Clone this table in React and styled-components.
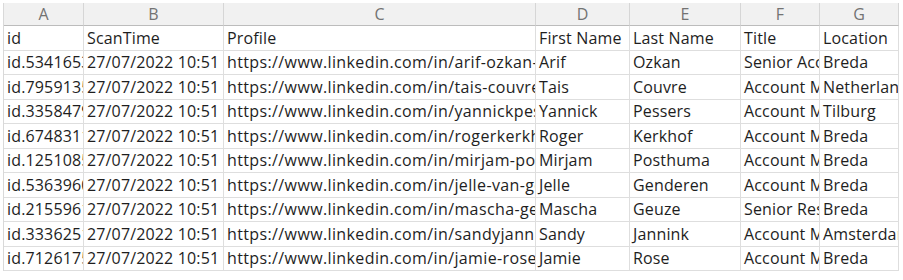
import React from "react";
import styled, { createGlobalStyle } from "styled-components";

const Global = createGlobalStyle`
  html, body { margin: 0; padding: 0; background: #ffffff; }
  body { font-family: "Open Sans", Lato, "Liberation Sans", sans-serif; }
`;

const COLS = [80, 140, 312, 94, 111, 79, 79];

const Sheet = styled.div`
  padding: 3px 0 0 3px;
`;

const Grid = styled.div`
  display: grid;
  grid-template-columns: ${COLS.map((c) => c + "px").join(" ")};
  grid-auto-rows: 24.5px;
  grid-template-rows: 23px;
  width: max-content;
  border-left: 1px solid #d9d9d9;
`;

const HeadCell = styled.div`
  background: #f1f1f1;
  color: #737373;
  font-size: 16px;
  display: flex;
  align-items: center;
  justify-content: center;
  border-right: 1px solid #d6d6d6;
  border-bottom: 1px solid #bcbcbc;
  box-sizing: border-box;
`;

const Cell = styled.div`
  color: #1e1e1e;
  font-size: 16px;
  letter-spacing: ${(p) => (p.$wide ? "0.38px" : "0.15px")};
  padding-left: 3px;
  white-space: nowrap;
  overflow: hidden;
  display: flex;
  align-items: center;
  border-right: 1px solid #dedede;
  border-bottom: 1px solid #dedede;
  box-sizing: border-box;
`;

const headers = ["A", "B", "C", "D", "E", "F", "G"];

const rows = [
  ["id", "ScanTime", "Profile", "First Name", "Last Name", "Title", "Location"],
  ["id.5341653", "27/07/2022 10:51", "https://www.linkedin.com/in/arif-ozkan-", "Arif", "Ozkan", "Senior Account Manager", "Breda"],
  ["id.7959135", "27/07/2022 10:51", "https://www.linkedin.com/in/tais-couvre", "Tais", "Couvre", "Account Manager", "Netherlands"],
  ["id.3358479", "27/07/2022 10:51", "https://www.linkedin.com/in/yannickpessers", "Yannick", "Pessers", "Account Manager", "Tilburg"],
  ["id.6748311", "27/07/2022 10:51", "https://www.linkedin.com/in/rogerkerkhof", "Roger", "Kerkhof", "Account Manager", "Breda"],
  ["id.1251085", "27/07/2022 10:51", "https://www.linkedin.com/in/mirjam-posthuma", "Mirjam", "Posthuma", "Account Manager", "Breda"],
  ["id.5363960", "27/07/2022 10:51", "https://www.linkedin.com/in/jelle-van-genderen", "Jelle", "Genderen", "Account Manager", "Breda"],
  ["id.2155961", "27/07/2022 10:51", "https://www.linkedin.com/in/mascha-geuze", "Mascha", "Geuze", "Senior Researcher", "Breda"],
  ["id.3336251", "27/07/2022 10:51", "https://www.linkedin.com/in/sandyjannink", "Sandy", "Jannink", "Account Manager", "Amsterdam"],
  ["id.7126175", "27/07/2022 10:51", "https://www.linkedin.com/in/jamie-rose", "Jamie", "Rose", "Account Manager", "Breda"],
];

export default function App() {
  return (
    <Sheet>
      <Global />
      <Grid>
        {headers.map((h) => (
          <HeadCell key={h}>{h}</HeadCell>
        ))}
        {rows.map((r, i) =>
          r.map((v, j) => (
            <Cell key={i + "-" + j} $wide={j === 2 && i > 0}>
              {v}
            </Cell>
          ))
        )}
      </Grid>
    </Sheet>
  );
}
